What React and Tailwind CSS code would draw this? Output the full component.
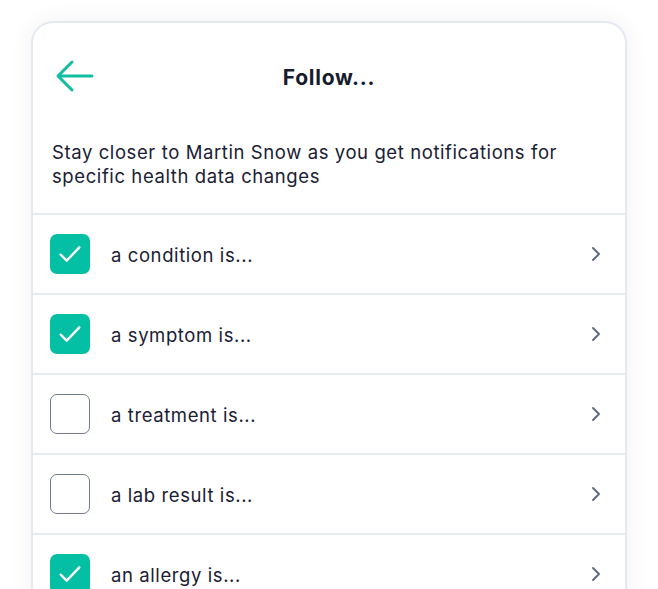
import { ChevronRight } from "lucide-react";

const items = [
  { label: "a condition is...", checked: true },
  { label: "a symptom is...", checked: true },
  { label: "a treatment is...", checked: false },
  { label: "a lab result is...", checked: false },
  { label: "an allergy is...", checked: true },
];

function BackArrow() {
  return (
    <svg viewBox="0 0 40 40" className="h-10 w-10" aria-hidden="true">
      <path
        d="M37 20H4M17 6L3 20l14 14"
        fill="none"
        stroke="#10bfa2"
        strokeWidth="3"
        strokeLinecap="round"
        strokeLinejoin="round"
      />
    </svg>
  );
}

function Checkbox({ checked }) {
  if (checked) {
    return (
      <span className="flex h-10 w-10 shrink-0 items-center justify-center rounded-[7px] bg-[#03bfa3]">
        <svg viewBox="0 0 24 24" className="h-8 w-8" aria-hidden="true">
          <path
            d="M5 12.5l4.5 4.5L19 7"
            fill="none"
            stroke="white"
            strokeWidth="1.8"
            strokeLinecap="round"
            strokeLinejoin="round"
          />
        </svg>
      </span>
    );
  }
  return <span className="h-10 w-10 shrink-0 rounded-[7px] border-[1.5px] border-[#6f7c92] bg-white" />;
}

export default function App() {
  return (
    <div className="h-[589px] overflow-hidden bg-white pl-[31px] pr-[31px] pt-[21px] font-['Inter',sans-serif] text-[#1a2033]">
      <div className="h-[600px] overflow-hidden rounded-t-[22px] border-2 border-b-0 border-[#e3e8f1] bg-white shadow-[0_0_24px_rgba(15,23,42,0.06)]">
        <div className="relative mt-[33px] flex h-10 items-center px-[22px]">
          <BackArrow />
          <h1 className="absolute inset-x-0 pt-[3px] text-center text-[21px] font-bold tracking-[0.035em] text-[#161b2e]">Follow...</h1>
        </div>
        <p className="mt-[44px] px-[19px] pb-[25px] text-[18.5px] leading-6 tracking-[0.032em]">
          Stay closer to Martin Snow as you get notifications for specific health data changes
        </p>
        {items.map((item) => (
          <div key={item.label} className="flex h-[80px] items-center border-t-2 border-[#e6eaf2] pl-[17px] pr-[17px]">
            <Checkbox checked={item.checked} />
            <span className="ml-[21px] flex-1 pt-[3px] text-[18.5px] tracking-[0.032em]">{item.label}</span>
            <ChevronRight className="h-6 w-6 text-[#5b6882]" strokeWidth={1.9} />
          </div>
        ))}
      </div>
    </div>
  );
}
